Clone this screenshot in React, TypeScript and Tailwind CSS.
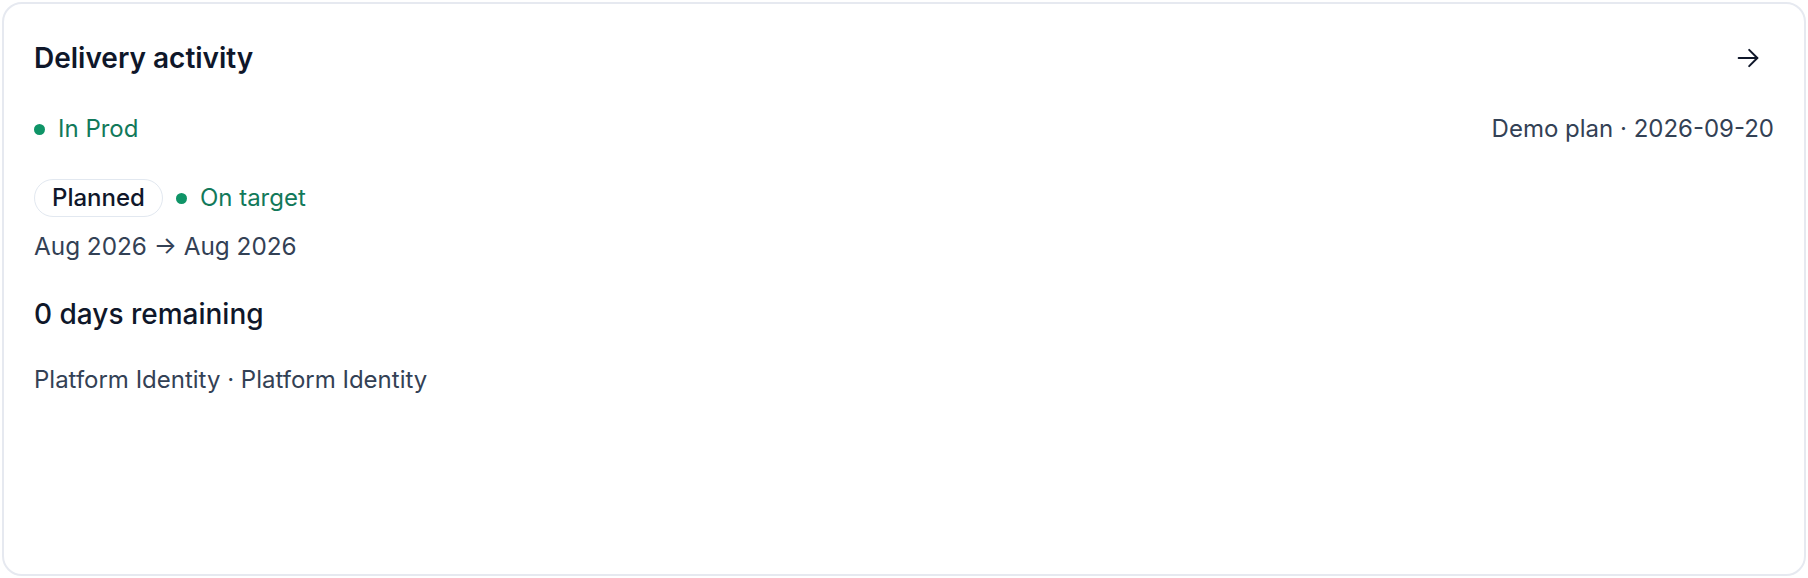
import { ReactNode } from "react";

function StatusDot({ children }: { children: ReactNode }) {
  return (
    <span className="flex items-center gap-[13px] text-[24px] leading-[36px] text-[#12795a]">
      <span className="block h-[11px] w-[11px] rounded-full bg-[#0f9467]" />
      {children}
    </span>
  );
}

export default function App() {
  return (
    <div className="bg-white p-[2px] font-['Inter',sans-serif]">
      <div className="h-[574px] rounded-[20px] border-2 border-[#e6e9f0] bg-white px-[30px] pt-[36px]">
        <div className="flex h-[36px] items-center justify-between">
          <h2 className="text-[28px] font-semibold leading-[36px] text-[#0f172a]">Delivery activity</h2>
          <button className="flex h-[36px] w-[52px] items-center justify-center text-[#0f172a]">
            <svg width="28" height="28" viewBox="0 0 24 24" fill="none" stroke="currentColor" strokeWidth="1.7" strokeLinecap="round" strokeLinejoin="round">
              <path d="M4 12h16" />
              <path d="M13 5l7 7-7 7" />
            </svg>
          </button>
        </div>

        <div className="mt-[35px] flex items-center justify-between">
          <StatusDot>In Prod</StatusDot>
          <span className="text-[24px] leading-[36px] text-[#334155]">Demo plan · 2026-09-20</span>
        </div>

        <div className="mt-[32px] flex items-center gap-[13px]">
          <span className="flex h-[38px] items-center rounded-full border-[1.5px] border-[#e2e8f0] px-[17px] text-[24px] font-medium text-[#0f172a]">
            Planned
          </span>
          <StatusDot>On target</StatusDot>
        </div>

        <div className="mt-[11px] text-[24.3px] leading-[36px] text-[#334155]">Aug 2026 → Aug 2026</div>

        <div className="mt-[32px] text-[28px] font-medium leading-[36px] text-[#0f172a]">0 days remaining</div>

        <div className="mt-[30px] text-[24px] leading-[36px] text-[#334155]">Platform Identity · Platform Identity</div>
      </div>
    </div>
  );
}
